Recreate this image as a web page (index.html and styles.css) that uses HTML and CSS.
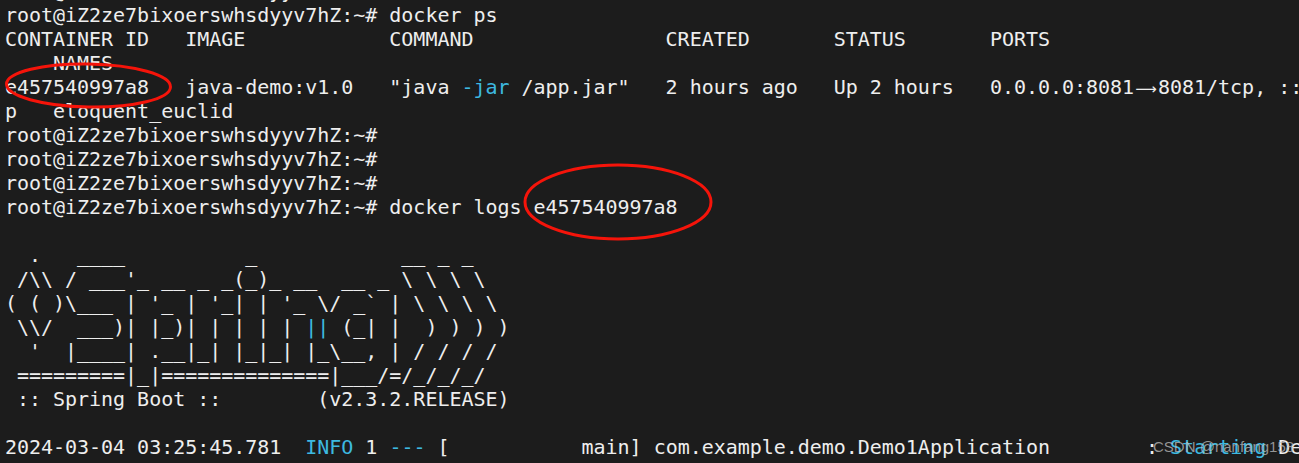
FILE: index.html
```
<!DOCTYPE html>
<html lang="en">
<head>
<meta charset="utf-8">
<title>Terminal</title>
<link rel="stylesheet" href="styles.css">
</head>
<body>
<main class="terminal">
<pre class="screen">root@iZ2ze7bixoerswhsdyyv7hZ:~#
root@iZ2ze7bixoerswhsdyyv7hZ:~# docker ps
CONTAINER ID   IMAGE            COMMAND                CREATED       STATUS       PORTS
    NAMES
e457540997a8   java-demo:v1.0   "java <span class="hl">-jar</span> /app.jar"   2 hours ago   Up 2 hours   0.0.0.0:8081<span class="arrow">⟶</span>8081/tcp, ::
p   eloquent_euclid
root@iZ2ze7bixoerswhsdyyv7hZ:~#
root@iZ2ze7bixoerswhsdyyv7hZ:~#
root@iZ2ze7bixoerswhsdyyv7hZ:~#
root@iZ2ze7bixoerswhsdyyv7hZ:~# docker logs e457540997a8

  .   ____          _            __ _ _
 /\\ / ___'_ __ _ _(_)_ __  __ _ \ \ \ \
( ( )\___ | '_ | '_| | '_ \/ _` | \ \ \ \
 \\/  ___)| |_)| | | | | <span class="hl">||</span> (_| |  ) ) ) )
  '  |____| .__|_| |_|_| |_\__, | / / / /
 =========|_|==============|___/=/_/_/_/
 :: Spring Boot ::        (v2.3.2.RELEASE)

2024-03-04 03:25:45.781  <span class="hl">INFO</span> 1 <span class="hl">---</span> [           main] com.example.demo.Demo1Application        : <span class="hl">Starting</span> De
                                  l         l      l                   l   l</pre>
<svg class="marks" viewBox="0 0 1299 463" aria-hidden="true">
<ellipse class="mark" cx="88.5" cy="85.5" rx="82" ry="21.5" transform="rotate(1 88.5 85.5)"/>
<ellipse class="mark" cx="618" cy="202" rx="93" ry="37"/>
</svg>
<div class="watermark">CSDN @nanfang158</div>
</main>
</body>
</html>
```
FILE: styles.css
```
html, body {
  margin: 0;
  height: 100%;
  background: #1c1c1c;
  overflow: hidden;
}
.terminal {
  position: relative;
  height: 463px;
  overflow: hidden;
  background: #1c1c1c;
}
.screen {
  margin: -21px 0 0;
  padding-left: 5px;
  font-family: "DejaVu Sans Mono", "Liberation Mono", monospace;
  font-size: 20px;
  line-height: 24px;
  letter-spacing: -0.03px;
  color: #eeeeee;
  white-space: pre;
}
.hl {
  color: #3db9e0;
}
.arrow {
  display: inline-flex;
  justify-content: center;
  width: 24px;
  font-family: "DejaVu Sans", sans-serif;
  font-size: 15px;
  line-height: 0;
}
.marks {
  position: absolute;
  left: 0;
  top: 0;
  width: 1299px;
  height: 463px;
  pointer-events: none;
}
.mark {
  fill: none;
  stroke: #f5140a;
  stroke-width: 3;
}
.watermark {
  position: absolute;
  left: 1153px;
  top: 438px;
  font-family: "Liberation Sans", Arial, sans-serif;
  font-size: 15px;
  line-height: 18px;
  color: rgba(190, 190, 190, 0.75);
}
```
